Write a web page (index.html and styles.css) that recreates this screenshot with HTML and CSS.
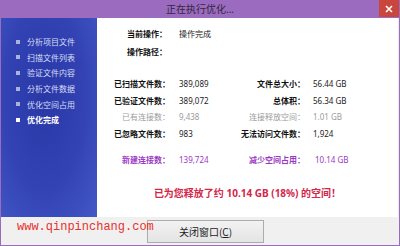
FILE: index.html
```html
<!DOCTYPE html>
<html lang="zh-CN">
<head>
    <meta charset="UTF-8">
    <title>正在执行优化...</title>
    <link rel="stylesheet" href="styles.css">
</head>
<body>
    <div class="window">
        <div class="titlebar">
            <span class="title">正在执行优化...</span>
            <span class="close">
                <svg width="8" height="8" viewBox="0 0 8 8"><path d="M1 1L7 7M7 1L1 7" stroke="#fff" stroke-width="1.6"/></svg>
            </span>
        </div>

        <div class="main">
            <ul class="steps">
                <li>分析项目文件</li>
                <li>扫描文件列表</li>
                <li>验证文件内容</li>
                <li>分析文件数据</li>
                <li>优化空间占用</li>
                <li class="done">优化完成</li>
            </ul>

            <div class="panel">
                <div class="current">
                    <span class="label">当前操作：</span>
                    <span>操作完成</span>
                    <span class="label">操作路径：</span>
                    <span></span>
                </div>

                <div class="stats">
                    <span class="label">已扫描文件数：</span>
                    <span class="num">389,089</span>
                    <span class="label">文件总大小：</span>
                    <span class="num">56.44 GB</span>

                    <span class="label">已验证文件数：</span>
                    <span class="num">389,072</span>
                    <span class="label">总体积：</span>
                    <span class="num">56.34 GB</span>

                    <span class="label muted">已有连接数：</span>
                    <span class="num muted">9,438</span>
                    <span class="label muted">连接释放空间：</span>
                    <span class="num muted">1.01 GB</span>

                    <span class="label">已忽略文件数：</span>
                    <span class="num">983</span>
                    <span class="label">无法访问文件数：</span>
                    <span class="num">1,924</span>
                </div>

                <div class="stats saved">
                    <span class="label">新建连接数：</span>
                    <span class="num">139,724</span>
                    <span class="label">减少空间占用：</span>
                    <span class="num">10.14 GB</span>
                </div>

                <p class="result">已为您释放了约 10.14 GB (18%) 的空间！</p>
            </div>
        </div>

        <div class="footer">
            <span class="watermark">www.qinpinchang.com</span>
            <button class="close-btn">关闭窗口(<u>C</u>)</button>
        </div>
    </div>
</body>
</html>
```

FILE: styles.css
```css
body {
    margin: 0;
    font-family: "Noto Sans", "Noto Sans CJK SC", sans-serif;
}
.window {
    width: 400px;
    height: 246px;
    box-sizing: border-box;
    background: #9a6bbf;
    padding: 0 1px 1px 1px;
    display: flex;
    flex-direction: column;
}
.titlebar {
    height: 18px;
    display: grid;
    grid-template-columns: 1fr auto 1fr;
    align-items: center;
}
.title {
    grid-column: 2;
    font-size: 10px;
    color: #352640;
    line-height: 18px;
}
.close {
    grid-column: 3;
    justify-self: end;
    align-self: start;
    width: 20px;
    height: 17px;
    background: #c8463d;
    display: flex;
    align-items: center;
    justify-content: center;
}
.main {
    height: 199px;
    display: flex;
}
.steps {
    width: 96px;
    margin: 0;
    padding: 16px 0 0 15px;
    box-sizing: border-box;
    list-style: none;
    background: radial-gradient(ellipse at 45% 40%, #2a38a6 0%, #3343b4 55%, #4458c6 100%);
}
.steps li {
    display: flex;
    align-items: center;
    height: 15.6px;
    font-size: 8px;
    color: #d8ddf6;
}
.steps li::before {
    content: "";
    width: 4px;
    height: 4px;
    margin-right: 7px;
    background: #aab3dc;
}
.steps li.done {
    font-weight: bold;
    color: #fff;
}
.steps li.done::before {
    background: #fff;
}
.panel {
    flex: 1;
    background: #fff;
    border-right: 1px solid #ececec;
    padding: 6px 0 0 14px;
    font-size: 8px;
    color: #222;
}
.label {
    font-weight: bold;
    color: #111;
}
.current {
    margin-left: 16px;
    display: grid;
    grid-template-columns: 52px auto;
    grid-auto-rows: 18.4px;
    align-items: center;
}
.stats {
    margin-top: 15px;
    display: grid;
    grid-template-columns: 59px 70px 65px auto;
    grid-auto-rows: 16.4px;
    align-items: center;
}
.stats .label {
    text-align: right;
}
.stats .num:nth-child(2n) {
    padding-left: 9px;
}
.stats .num:nth-child(4n) {
    padding-left: 8px;
}
.stats .muted {
    color: #9c9c9c;
    font-weight: normal;
}
.stats.saved {
    margin-top: 10px;
}
.stats.saved span {
    color: #9a38c4;
}
.stats.saved .num:nth-child(4n) {
    padding-left: 10px;
}
.result {
    margin: 18px 0 0 -14px;
    text-align: center;
    font-size: 10px;
    line-height: 14px;
    font-weight: bold;
    color: #d4264a;
}
.footer {
    flex: 1;
    background: #f0f0f0;
    position: relative;
    padding: 2px 0 0 146px;
}
.watermark {
    position: absolute;
    left: 16px;
    top: 3px;
    font-family: "Liberation Mono", monospace;
    font-size: 12px;
    color: #e8312f;
    z-index: 1;
}
.close-btn {
    width: 117px;
    height: 23px;
    border: 1px solid #acacac;
    background: linear-gradient(#f2f2f2, #e4e4e4);
    font-family: "Noto Sans CJK SC", sans-serif;
    font-size: 10px;
    color: #222;
    padding: 0;
}
```
